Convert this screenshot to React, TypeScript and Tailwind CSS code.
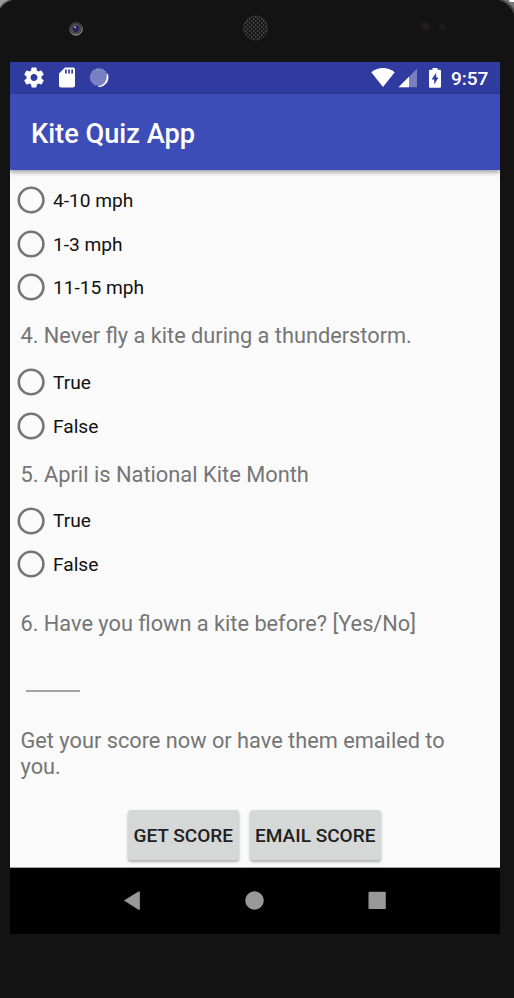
import type { ReactNode } from "react";

function Option({ label }: { label: string }) {
  return (
    <label className="flex h-[43.6px] items-center gap-[8px] pl-[7px] text-[19.15px] leading-none text-[#111]">
      <svg className="size-[28px] shrink-0" viewBox="0 0 28 28">
        <circle cx="14.1" cy="14" r="12.3" fill="none" stroke="#757575" strokeWidth="2.6" />
      </svg>
      <span className="pt-[0.8px]">{label}</span>
    </label>
  );
}

function Question({ children, className }: { children: ReactNode; className: string }) {
  return (
    <p className={"flex items-center whitespace-nowrap pl-[10.5px] leading-none text-[#757575] " + className}>
      {children}
    </p>
  );
}

function StatusBar() {
  return (
    <div className="flex h-8 shrink-0 items-center bg-[#303b9f] text-white">
      <svg className="ml-[12px] size-[24px]" viewBox="0 0 24 24" fill="currentColor">
        <path transform="translate(0 -.5)" d="M19.43 12.98c.04-.32.07-.64.07-.98s-.03-.66-.07-.98l2.11-1.65c.19-.15.24-.42.12-.64l-2-3.46c-.12-.22-.39-.3-.61-.22l-2.49 1c-.52-.4-1.08-.73-1.69-.98l-.38-2.65C14.46 2.18 14.25 2 14 2h-4c-.25 0-.46.18-.49.42l-.38 2.65c-.61.25-1.17.59-1.69.98l-2.49-1c-.23-.09-.49 0-.61.22l-2 3.46c-.13.22-.07.49.12.64l2.11 1.65c-.04.32-.07.65-.07.98s.03.66.07.98l-2.11 1.65c-.19.15-.24.42-.12.64l2 3.46c.12.22.39.3.61.22l2.49-1c.52.4 1.08.73 1.69.98l.38 2.65c.03.24.24.42.49.42h4c.25 0 .46-.18.49-.42l.38-2.65c.61-.25 1.17-.59 1.69-.98l2.49 1c.23.09.49 0 .61-.22l2-3.46c.12-.22.07-.49-.12-.64l-2.11-1.65zM12 15.5c-1.93 0-3.5-1.57-3.5-3.5s1.57-3.5 3.5-3.5 3.5 1.57 3.5 3.5-1.57 3.5-3.5 3.5z" />
      </svg>
      <svg className="ml-[9px] size-[24px]" viewBox="0 0 24 24" fill="currentColor">
        <path transform="translate(0 -.5)" d="M18 2h-8L4.02 8 4 20c0 1.1.9 2 2 2h12c1.1 0 2-.9 2-2V4c0-1.1-.9-2-2-2zm-6.2 6h-1.7V4h1.7v4zm3.1 0h-1.7V4h1.7v4zm3.1 0h-1.7V4H18v4z" />
      </svg>
      <svg className="ml-[10px] size-[20px]" viewBox="0 0 20 20">
        <circle cx="9.8" cy="9.2" r="8.3" fill="#7981c3" />
        <circle cx="9.8" cy="9.2" r="8.3" fill="none" stroke="#9299cf" strokeWidth="1.6" strokeDasharray="1.2 1.05" />
        <path d="M18.4 5.8A9.2 9.2 0 0 1 9.5 18.6Q16.2 17 17.6 11.5Q18.3 9 18.4 5.8Z" fill="white" stroke="white" strokeWidth=".7" />
      </svg>
      <div className="ml-auto flex items-center">
        <svg className="h-[20px] w-[24px]" viewBox="0 0 24 20" fill="currentColor">
          <path d="M.3 4.2Q12-4.2 23.7 4.2L12 18.9Z" />
        </svg>
        <svg className="ml-[3px] size-[20px]" viewBox="0 0 20 20" fill="currentColor">
          <path d="M19 .8V19.3H.5Z" opacity=".35" />
          <path d="M11 8.8V19.3H.5Z" />
        </svg>
        <svg className="ml-[11px] h-[20px] w-[12px]" viewBox="0 0 12 20">
          <path d="M3.5 1.8V0h5v1.8H11q1 0 1 1V18.7q0 1-1 1H1q-1 0-1-1V2.8q0-1 1-1Z" fill="white" />
          <path d="M7.2 4.8 2.6 11.4h2.6v5L9.5 9.6H7.2Z" fill="#303b9f" />
        </svg>
        <span className="ml-[10px] mr-[11.6px] pt-[1px] text-[19.05px] font-medium leading-none">9:57</span>
      </div>
    </div>
  );
}

function Bezel() {
  return (
    <div className="h-[62px] shrink-0">
      <svg className="block h-[62px] w-[514px]" viewBox="0 0 514 62">
        <defs>
          <pattern id="mesh" width="4" height="4" patternUnits="userSpaceOnUse">
            <rect width="4" height="4" fill="#4c4c4c" />
            <rect x=".3" y=".1" width="2.8" height="1.6" fill="#090909" />
            <rect x="2.3" y="2.1" width="1.7" height="1.6" fill="#090909" />
            <rect x="0" y="2.1" width="1.1" height="1.6" fill="#090909" />
          </pattern>
          <radialGradient id="lens">
            <stop offset="0" stopColor="#3f3a9c" />
            <stop offset=".35" stopColor="#1b1850" />
            <stop offset=".5" stopColor="#35353c" />
            <stop offset=".7" stopColor="#55555a" />
            <stop offset=".85" stopColor="#333" />
            <stop offset="1" stopColor="#444" />
          </radialGradient>
          <linearGradient id="rim" x1="0" y1="0" x2="0.3" y2="1">
            <stop offset=".35" stopColor="#333" />
            <stop offset="1" stopColor="#aaa" />
          </linearGradient>
        </defs>
        <path d="M0 0H12Q4 3 0 9Z" fill="#555" />
        <path d="M0 0H9Q3 2 0 7Z" fill="#999" />
        <path d="M499 0H514V14Q510 4 499 0Z" fill="#444" />
        <path d="M503 0H514V9Q510 3 503 0Z" fill="#777" />
        <path d="M509 0H514V2H510Z" fill="#fff" />
        <circle cx="76" cy="28.7" r="6.4" fill="url(#lens)" stroke="url(#rim)" strokeWidth="1" />
        <circle cx="75" cy="27" r="1" fill="#aaa8dd" />
        <circle cx="255.5" cy="28" r="12" fill="url(#mesh)" stroke="#383838" strokeWidth=".8" />
        <circle cx="425" cy="26.5" r="4.8" fill="#1c1a1a" />
        <circle cx="426" cy="26.5" r="2" fill="#271f1f" />
        <circle cx="442.5" cy="27" r="3.2" fill="#1d1b1b" />
      </svg>
    </div>
  );
}

export default function App() {
  return (
    <div className="flex h-[998px] w-[514px] flex-col overflow-hidden bg-[#131313] font-['Roboto',sans-serif]">
      <Bezel />
      <div className="ml-[10px] flex h-[872px] w-[490px] flex-col overflow-hidden bg-[#fafafa]">
        <StatusBar />
        <header className="z-10 flex h-[76px] shrink-0 items-center bg-[#3d4db7] pl-[21px] pt-[5px] text-[27.2px] font-medium leading-none text-white shadow-[0_2px_5px_rgba(0,0,0,0.4)]">
          <h1>Kite Quiz App</h1>
        </header>
        <main className="flex h-[697px] shrink-0 flex-col pt-[8.4px]">
          <Option label="4-10 mph" />
          <Option label="1-3 mph" />
          <Option label="11-15 mph" />
          <Question className="h-[51.2px] pt-[2px] text-[21.75px]">4. Never fly a kite during a thunderstorm.</Question>
          <Option label="True" />
          <Option label="False" />
          <Question className="h-[51.2px] pt-[3px] text-[21.85px]">5. April is National Kite Month</Question>
          <Option label="True" />
          <Option label="False" />
          <Question className="h-[75px] text-[21.75px]">6. Have you flown a kite before? [Yes/No]</Question>
          <div className="ml-4 h-[31px] w-[54px] border-b-2 border-[#a3a3a3]" />
          <p className="mt-[36px] pl-[10.5px] text-[21.75px] leading-[25.6px] text-[#757575]">
            Get your score now or have them emailed to
            <br />
            you.
          </p>
          <div className="mt-auto mb-[7px] ml-[118px] flex gap-[11px] text-[19.05px] font-medium leading-none text-[#202121]">
            <button className="h-[50px] w-[110.5px] whitespace-nowrap rounded-[3px] bg-[#d6d7d7] pt-[2px] shadow-[0_2px_3px_rgba(0,0,0,0.3)]">GET SCORE</button>
            <button className="h-[50px] w-[131.5px] whitespace-nowrap rounded-[3px] bg-[#d6d7d7] pt-[2px] shadow-[0_2px_3px_rgba(0,0,0,0.3)]">EMAIL SCORE</button>
          </div>
        </main>
        <nav className="h-[67px] shrink-0 border-t border-[#a5a5a5] bg-black">
          <svg className="block h-[66px] w-[490px]" viewBox="0 0 490 66" fill="#999">
            <path d="M114.4 32.5 128.6 23.8q1-.5 1 .5V41q0 1-1 .5Z" stroke="#999" strokeWidth=".6" />
            <circle cx="244.5" cy="32.5" r="9.3" />
            <rect x="358.5" y="23.7" width="17.3" height="17.3" rx="1" />
          </svg>
        </nav>
      </div>
    </div>
  );
}
